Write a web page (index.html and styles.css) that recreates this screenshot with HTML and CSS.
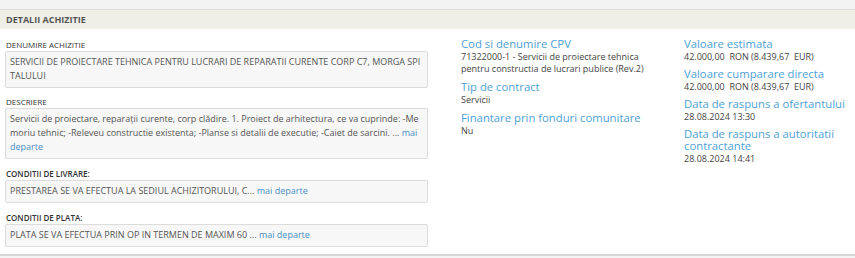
FILE: index.html
```html
<!DOCTYPE html>
<html lang="ro">
<head>
    <meta charset="UTF-8">
    <meta name="viewport" content="width=device-width, initial-scale=1.0">
    <title>Detalii achizitie</title>
    <link rel="stylesheet" href="styles.css">
</head>
<body>
    <div class="top-strip"></div>
    <div class="panel">
        <div class="panel-heading">DETALII ACHIZITIE</div>
        <div class="panel-body">
            <div class="col-left">
                <div class="field-label">DENUMIRE ACHIZITIE</div>
                <div class="field-box">SERVICII DE PROIECTARE TEHNICA PENTRU LUCRARI DE REPARATII CURENTE CORP C7, MORGA SPITALULUI</div>

                <div class="field-label">DESCRIERE</div>
                <div class="field-box">Servicii de proiectare, reparații curente, corp clădire. 1. Proiect de arhitectura, ce va cuprinde: -Memoriu tehnic; -Releveu constructie existenta; -Planse si detalii de executie; -Caiet de sarcini. ... <a href="#">mai departe</a></div>

                <div class="field-label strong">CONDITII DE LIVRARE:</div>
                <div class="field-box">PRESTAREA SE VA EFECTUA LA SEDIUL ACHIZITORULUI, C... <a href="#">mai departe</a></div>

                <div class="field-label strong">CONDITII DE PLATA:</div>
                <div class="field-box">PLATA SE VA EFECTUA PRIN OP IN TERMEN DE MAXIM 60 ... <a href="#">mai departe</a></div>
            </div>

            <div class="col-mid">
                <div class="info">
                    <div class="info-title">Cod si denumire CPV</div>
                    <div class="info-value">71322000-1 - Servicii de proiectare tehnica pentru constructia de lucrari publice (Rev.2)</div>
                </div>
                <div class="info">
                    <div class="info-title">Tip de contract</div>
                    <div class="info-value">Servicii</div>
                </div>
                <div class="info">
                    <div class="info-title">Finantare prin fonduri comunitare</div>
                    <div class="info-value">Nu</div>
                </div>
            </div>

            <div class="col-right">
                <div class="info">
                    <div class="info-title">Valoare estimata</div>
                    <div class="info-value">42.000,00&nbsp; RON (8.439,67&nbsp; EUR)</div>
                </div>
                <div class="info">
                    <div class="info-title">Valoare cumparare directa</div>
                    <div class="info-value">42.000,00&nbsp; RON (8.439,67&nbsp; EUR)</div>
                </div>
                <div class="info">
                    <div class="info-title">Data de raspuns a ofertantului</div>
                    <div class="info-value">28.08.2024 13:30</div>
                </div>
                <div class="info">
                    <div class="info-title">Data de raspuns a autoritatii contractante</div>
                    <div class="info-value">28.08.2024 14:41</div>
                </div>
            </div>
        </div>
    </div>
</body>
</html>
```

FILE: styles.css
```css
body {
    margin: 0;
    font-family: "Open Sans", Arial, sans-serif;
    color: #444;
    background-color: #f4f4f4;
}
.top-strip {
    height: 9px;
    background-color: #f3f3f3;
    border-bottom: 1px solid #dcdcd6;
}
.panel {
    background-color: #fff;
    border-bottom: 2px solid #d6d6d6;
}
.panel-heading {
    background-color: #efeee7;
    height: 19px;
    line-height: 19px;
    padding-left: 6px;
    font-size: 9px;
    font-weight: bold;
    color: #555;
}
.panel-body {
    display: flex;
    padding-top: 8px;
    height: 225px;
    box-sizing: border-box;
}
.col-left {
    width: 423px;
    margin-left: 5px;
}
.col-mid {
    width: 200px;
    margin-left: 33px;
    margin-top: 1px;
}
.col-right {
    flex: 1;
    margin-left: 23px;
    margin-top: 1px;
}
.field-label {
    font-size: 8px;
    line-height: 11px;
    color: #333;
    padding-left: 1px;
    margin-top: 8px;
    margin-bottom: 1px;
}
.field-label:first-child {
    margin-top: 2px;
}
.field-label.strong {
    font-weight: 600;
    margin-top: 9px;
}
.field-box {
    background-color: #f7f7f7;
    border: 1px solid #dcdcdc;
    border-radius: 2px;
    padding: 3px 5px 4px 4px;
    font-size: 9px;
    line-height: 14px;
    color: #555;
    word-break: break-all;
}
.field-box a {
    color: #4a90c8;
    text-decoration: none;
}
.info {
    margin-bottom: 5px;
}
.col-mid .info {
    margin-bottom: 6px;
}
.info-title {
    font-size: 11.3px;
    line-height: 12px;
    color: #4e9fd6;
}
.info-value {
    font-size: 9px;
    line-height: 12px;
    color: #444;
    margin-top: 1px;
}
```
